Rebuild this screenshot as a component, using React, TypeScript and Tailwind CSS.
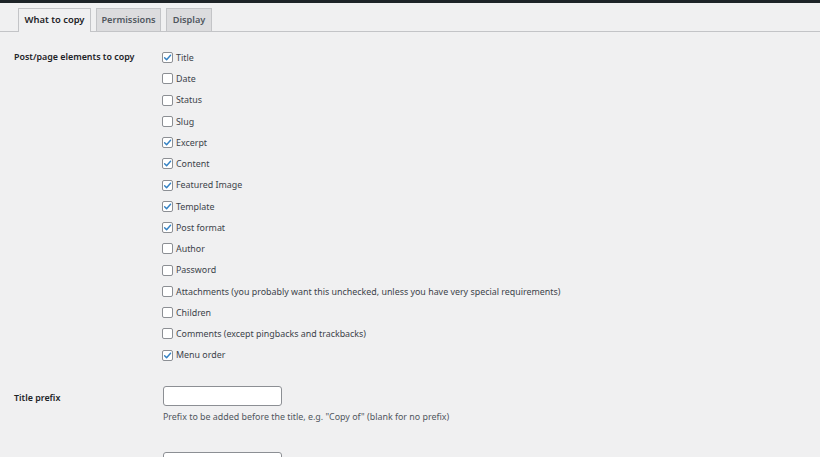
import React from "react";

const items: [string, boolean][] = [
  ["Title", true],
  ["Date", false],
  ["Status", false],
  ["Slug", false],
  ["Excerpt", true],
  ["Content", true],
  ["Featured Image", true],
  ["Template", true],
  ["Post format", true],
  ["Author", false],
  ["Password", false],
  ["Attachments (you probably want this unchecked, unless you have very special requirements)", false],
  ["Children", false],
  ["Comments (except pingbacks and trackbacks)", false],
  ["Menu order", true],
];

function Box({ checked }: { checked: boolean }) {
  return (
    <span className="flex h-[11px] w-[11px] shrink-0 items-center justify-center rounded-[2px] border border-[#8c8f94] bg-white">
      {checked && (
        <svg width="9" height="9" viewBox="0 0 10 10">
          <path d="M1.8 5.2 L4 7.4 L8.4 2.4" fill="none" stroke="#3582c4" strokeWidth="1.6" strokeLinecap="round" strokeLinejoin="round" />
        </svg>
      )}
    </span>
  );
}

export default function App() {
  return (
    <div className="h-[457px] w-[820px] overflow-hidden bg-[#f0f0f1] text-[8.9px] text-[#3c434a]" style={{ fontFamily: '"Noto Sans", "Open Sans", sans-serif' }}>
      <div className="h-[3px] bg-[#1d2327]" />
      <div className="mt-[5px] flex items-end gap-[5px] border-b border-[#c3c4c7] pl-[18px]">
        <div className="relative -mb-px flex h-[24px] w-[73px] items-center justify-center border border-b-0 border-[#c3c4c7] bg-[#f0f0f1] text-[9.4px] font-semibold text-[#1d2327]">
          What to copy
        </div>
        <div className="flex h-[23px] w-[65px] items-center justify-center border border-b-0 border-[#c3c4c7] bg-[#dcdcde] text-[9.2px] font-semibold text-[#50575e]">
          Permissions
        </div>
        <div className="flex h-[23px] w-[46px] items-center justify-center border border-b-0 border-[#c3c4c7] bg-[#dcdcde] text-[9.2px] font-semibold text-[#50575e]">
          Display
        </div>
      </div>
      <div className="flex pl-[14px] pt-[15px]">
        <div className="w-[148px] pt-[3px] font-semibold text-[#1d2327]">Post/page elements to copy</div>
        <div className="flex flex-col">
          {items.map(([label, c]) => (
            <div key={label} className="flex h-[21.25px] items-center gap-[3px]">
              <Box checked={c} />
              <span>{label}</span>
            </div>
          ))}
        </div>
      </div>
      <div className="mt-[20px] flex pl-[14px]">
        <div className="w-[149px] pt-[5px] font-semibold text-[#1d2327]">Title prefix</div>
        <div className="flex flex-col">
          <div className="h-[20px] w-[119px] rounded-[3px] border border-[#8c8f94] bg-white" />
          <div className="mt-[4px] text-[#50575e]">Prefix to be added before the title, e.g. "Copy of" (blank for no prefix)</div>
          <div className="mt-[29px] h-[20px] w-[119px] rounded-[3px] border border-[#8c8f94] bg-white" />
        </div>
      </div>
    </div>
  );
}
